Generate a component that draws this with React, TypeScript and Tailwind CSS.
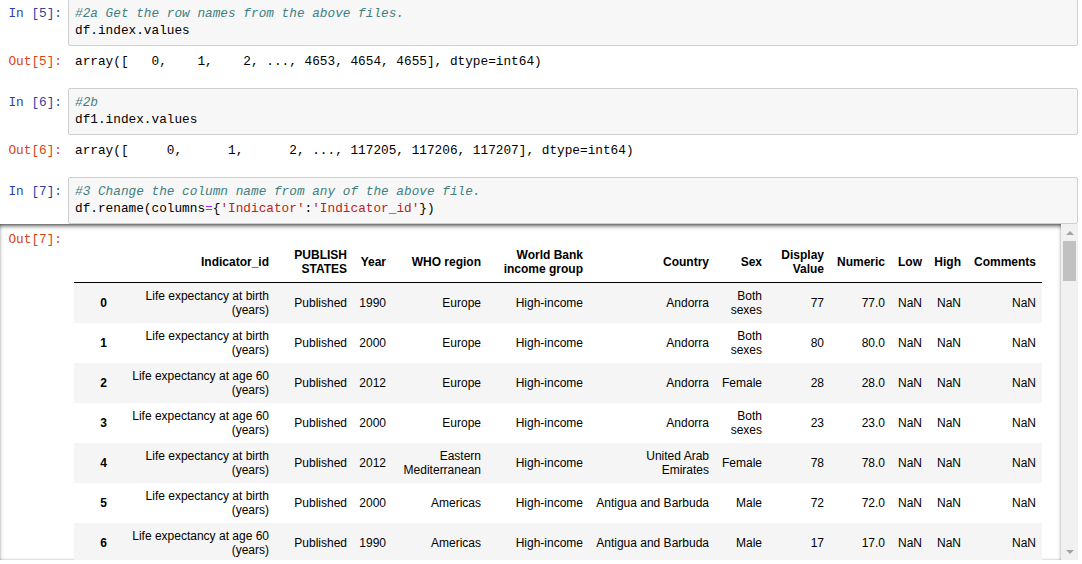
import React from "react"

type Tok = { t: string; c?: string }

const COMMENT = "italic text-[#408080]"
const OP = "text-[#AA22FF]"
const STR = "text-[#BA2121]"

function CodeLine({ toks }: { toks: Tok[] }) {
  return (
    <div className="h-[17px] leading-[17px] whitespace-pre">
      {toks.map((k, i) => (
        <span key={i} className={k.c}>
          {k.t}
        </span>
      ))}
    </div>
  )
}

function InputCell({ n, lines }: { n: number; lines: Tok[][] }) {
  return (
    <div className="flex">
      <div className="w-[68px] shrink-0 pt-[6px] pr-[6px] text-right leading-[17px] whitespace-pre text-[#303F9F]">
        In [{n}]:
      </div>
      <div className="flex-1 rounded-[2px] border border-[#cfcfcf] bg-[#f7f7f7] pt-[5px] pb-[6px] pl-[6px]">
        {lines.map((l, i) => (
          <CodeLine key={i} toks={l} />
        ))}
      </div>
    </div>
  )
}

function OutputLine({ n, text }: { n: number; text: string }) {
  return (
    <div className="mt-[7px] flex leading-[17px]">
      <div className="w-[68px] shrink-0 pr-[6px] text-right text-[#D84315]">Out[{n}]:</div>
      <div className="pl-[7px] whitespace-pre text-black">{text}</div>
    </div>
  )
}

// column widths, px (sum 968)
const colClass = [
  "w-[39px]",
  "w-[162px]",
  "w-[78px]",
  "w-[39px]",
  "w-[95px]",
  "w-[102px]",
  "w-[126px]",
  "w-[53px]",
  "w-[62px]",
  "w-[61px]",
  "w-[37px]",
  "w-[39px]",
  "w-[75px]",
]

const headers: string[][] = [
  [""],
  ["Indicator_id"],
  ["PUBLISH", "STATES"],
  ["Year"],
  ["WHO region"],
  ["World Bank", "income group"],
  ["Country"],
  ["Sex"],
  ["Display", "Value"],
  ["Numeric"],
  ["Low"],
  ["High"],
  ["Comments"],
]

const birth = ["Life expectancy at birth", "(years)"]
const age60 = ["Life expectancy at age 60", "(years)"]
const both = ["Both", "sexes"]

const rows: string[][][] = [
  [["0"], birth, ["Published"], ["1990"], ["Europe"], ["High-income"], ["Andorra"], both, ["77"], ["77.0"]],
  [["1"], birth, ["Published"], ["2000"], ["Europe"], ["High-income"], ["Andorra"], both, ["80"], ["80.0"]],
  [["2"], age60, ["Published"], ["2012"], ["Europe"], ["High-income"], ["Andorra"], ["Female"], ["28"], ["28.0"]],
  [["3"], age60, ["Published"], ["2000"], ["Europe"], ["High-income"], ["Andorra"], both, ["23"], ["23.0"]],
  [
    ["4"],
    birth,
    ["Published"],
    ["2012"],
    ["Eastern", "Mediterranean"],
    ["High-income"],
    ["United Arab", "Emirates"],
    ["Female"],
    ["78"],
    ["78.0"],
  ],
  [["5"], birth, ["Published"], ["2000"], ["Americas"], ["High-income"], ["Antigua and Barbuda"], ["Male"], ["72"], ["72.0"]],
  [["6"], age60, ["Published"], ["1990"], ["Americas"], ["High-income"], ["Antigua and Barbuda"], ["Male"], ["17"], ["17.0"]],
]

function Lines({ lines }: { lines: string[] }) {
  return (
    <>
      {lines.map((l, i) => (
        <React.Fragment key={i}>
          {i > 0 && <br />}
          {l}
        </React.Fragment>
      ))}
    </>
  )
}

function DataFrame() {
  return (
    <table className="w-[968px] table-fixed border-collapse font-['Liberation_Sans',Arial,sans-serif] text-[12px] leading-[14px] text-black">
      <colgroup>
        {colClass.map((c, i) => (
          <col key={i} className={c} />
        ))}
      </colgroup>
      <thead>
        <tr className="border-b border-black">
          {headers.map((h, i) => (
            <th key={i} className="px-[6px] py-[6px] text-right align-middle font-bold whitespace-nowrap">
              <Lines lines={h} />
            </th>
          ))}
        </tr>
      </thead>
      <tbody>
        {rows.map((r, ri) => (
          <tr key={ri} className={ri % 2 === 0 ? "bg-[#f5f5f5]" : "bg-white"}>
            <th className="px-[6px] py-[6px] text-right align-middle font-bold">{r[0][0]}</th>
            {r.slice(1).map((c, ci) => (
              <td key={ci} className="px-[6px] py-[6px] text-right align-middle whitespace-nowrap">
                <Lines lines={c} />
              </td>
            ))}
            <td className="px-[6px] py-[6px] text-right align-middle">NaN</td>
            <td className="px-[6px] py-[6px] text-right align-middle">NaN</td>
            <td className="px-[6px] py-[6px] text-right align-middle">NaN</td>
          </tr>
        ))}
      </tbody>
    </table>
  )
}

function Scrollbar() {
  return (
    <div className="flex w-[17px] shrink-0 flex-col bg-[#f1f1f1]">
      <div className="flex h-[17px] items-center justify-center">
        <svg width="8" height="4" viewBox="0 0 8 4">
          <path d="M0 4 L4 0 L8 4 Z" fill="#a3a3a3" />
        </svg>
      </div>
      <div className="flex-1 px-[2px]">
        <div className="h-[40px] bg-[#c1c1c1]" />
      </div>
      <div className="flex h-[17px] items-center justify-center">
        <svg width="8" height="4" viewBox="0 0 8 4">
          <path d="M0 0 L8 0 L4 4 Z" fill="#a3a3a3" />
        </svg>
      </div>
    </div>
  )
}

export default function App() {
  return (
    <div className="h-[564px] w-[1082px] overflow-hidden bg-white font-['Liberation_Mono',monospace] text-[12.75px]">
      <div className="-mt-[1px] w-[1078px]">
        <InputCell
          n={5}
          lines={[[{ t: "#2a Get the row names from the above files.", c: COMMENT }], [{ t: "df.index.values" }]]}
        />
        <OutputLine n={5} text="array([   0,    1,    2, ..., 4653, 4654, 4655], dtype=int64)" />

        <div className="mt-[18px]">
          <InputCell n={6} lines={[[{ t: "#2b", c: COMMENT }], [{ t: "df1.index.values" }]]} />
        </div>
        <OutputLine
          n={6}
          text="array([     0,      1,      2, ..., 117205, 117206, 117207], dtype=int64)"
        />

        <div className="mt-[18px]">
          <InputCell
            n={7}
            lines={[
              [{ t: "#3 Change the column name from any of the above file.", c: COMMENT }],
              [
                { t: "df.rename(columns" },
                { t: "=", c: OP },
                { t: "{" },
                { t: "'Indicator'", c: STR },
                { t: ":" },
                { t: "'Indicator_id'", c: STR },
                { t: "})" },
              ],
            ]}
          />
        </div>

        <div className="flex h-[336px]">
          <div className="flex flex-1 overflow-hidden shadow-[inset_0_3px_5px_-2px_rgba(0,0,0,0.9),inset_0_-2px_3px_-2px_rgba(0,0,0,0.3)]">
            <div className="w-[68px] shrink-0 pt-[7px] pr-[6px] text-right leading-[17px] text-[#D84315]">
              Out[7]:
            </div>
            <div className="pt-[18px] pl-[6px]">
              <DataFrame />
            </div>
          </div>
          <Scrollbar />
        </div>
      </div>
    </div>
  )
}
